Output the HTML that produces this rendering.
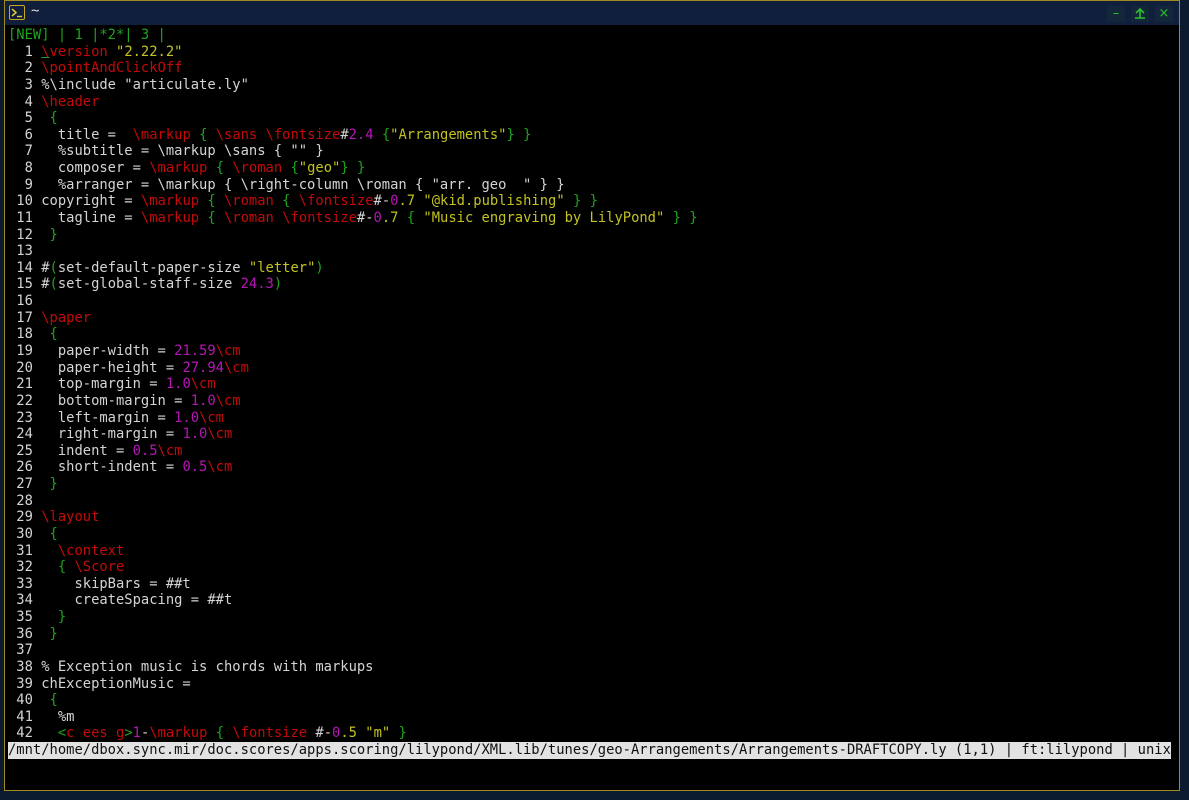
<!DOCTYPE html>
<html><head><meta charset="utf-8">
<style>
html,body{margin:0;padding:0;width:1189px;height:800px;overflow:hidden;background:#0c1a30;}
#win{position:absolute;left:4px;top:0;width:1176px;height:791px;background:#000;border:1px solid #a08a20;box-sizing:border-box;}
#title{position:absolute;left:0;top:0;right:0;height:24px;background:#0f1f3c;}
#icon{position:absolute;left:4px;top:4px;width:16px;height:15px;border:1px solid #c9a820;border-radius:2px;box-sizing:border-box;}
#tilde{position:absolute;left:26px;top:2px;color:#ddd;font:14px "DejaVu Sans Mono",monospace;}
.btn{position:absolute;top:5px;width:18px;height:16px;background:#12283a;color:#2cc02c;font:13px "DejaVu Sans",sans-serif;text-align:center;line-height:16px;}
.r{position:absolute;left:3px;height:16.63px;white-space:pre;font:13.8px/16.63px "DejaVu Sans Mono",monospace;color:#d4d4d4;}
.k{color:#c20a0a}.g{color:#1fa31f}.y{color:#c2c220}.m{color:#b516b5}
#status{position:absolute;left:3px;top:741px;width:1163px;height:17px;background:#e2e2e2;color:#111;white-space:pre;font:13.8px/17px "DejaVu Sans Mono",monospace;}
#rows{position:absolute;left:0;top:1px;}
</style></head><body>
<div id="win">
<div id="title">
 <div id="icon"><svg width="14" height="13" viewBox="0 0 14 13"><path d="M2 3 L6 6.5 L2 10" stroke="#e8c830" stroke-width="1.5" fill="none"/><path d="M7 10.5 H12" stroke="#e8c830" stroke-width="1.4"/></svg></div>
 <div id="tilde">~</div>
 <div class="btn" style="left:1102px">–</div>
 <div class="btn" style="left:1126px"><svg width="14" height="14" viewBox="0 0 14 14"><path d="M2 12 H12 M7 12 V4 M3 7 L7 3 L11 7" stroke="#2cc02c" stroke-width="1.6" fill="none"/></svg></div>
 <div class="btn" style="left:1150px">×</div>
</div>
<div id="rows">
<div class="r g" style="top:25px">[NEW] | 1 |*2*| 3 |</div>
<div class="r" style="top:41.6px">  1 <span class="k" style="text-decoration:underline;text-decoration-color:#1fa31f">\</span><span class="k">version</span> <span class="y">"2.22.2"</span></div>
<div class="r" style="top:58.3px">  2 <span class="k">\pointAndClickOff</span></div>
<div class="r" style="top:74.9px">  3 %\include "articulate.ly"</div>
<div class="r" style="top:91.5px">  4 <span class="k">\header</span></div>
<div class="r" style="top:108.2px">  5 <span class="g"> {</span></div>
<div class="r" style="top:124.8px">  6   title =  <span class="k">\markup</span> <span class="g">{</span> <span class="k">\sans \fontsize</span>#<span class="m">2.4</span> <span class="g">{</span><span class="y">"Arrangements"</span><span class="g">}</span> <span class="g">}</span></div>
<div class="r" style="top:141.4px">  7   %subtitle = \markup \sans { "" }</div>
<div class="r" style="top:158.0px">  8   composer = <span class="k">\markup</span> <span class="g">{</span> <span class="k">\roman</span> <span class="g">{</span><span class="y">"geo"</span><span class="g">}</span> <span class="g">}</span></div>
<div class="r" style="top:174.7px">  9   %arranger = \markup { \right-column \roman { "arr. geo  " } }</div>
<div class="r" style="top:191.3px"> 10 copyright = <span class="k">\markup</span> <span class="g">{</span> <span class="k">\roman</span> <span class="g">{</span> <span class="k">\fontsize</span>#-<span class="m">0</span><span class="y">.7</span> <span class="y">"@kid.publishing"</span> <span class="g">}</span> <span class="g">}</span></div>
<div class="r" style="top:207.9px"> 11   tagline = <span class="k">\markup</span> <span class="g">{</span> <span class="k">\roman \fontsize</span>#-<span class="m">0</span><span class="y">.7</span> <span class="g">{</span> <span class="y">"Music engraving by LilyPond"</span> <span class="g">}</span> <span class="g">}</span></div>
<div class="r" style="top:224.6px"> 12 <span class="g"> }</span></div>
<div class="r" style="top:241.2px"> 13</div>
<div class="r" style="top:257.8px"> 14 #<span class="g">(</span>set-default-paper-size <span class="y">"letter"</span><span class="g">)</span></div>
<div class="r" style="top:274.4px"> 15 #<span class="g">(</span>set-global-staff-size <span class="m">24.3</span><span class="g">)</span></div>
<div class="r" style="top:291.1px"> 16</div>
<div class="r" style="top:307.7px"> 17 <span class="k">\paper</span></div>
<div class="r" style="top:324.3px"> 18 <span class="g"> {</span></div>
<div class="r" style="top:341.0px"> 19   paper-width = <span class="m">21.59</span><span class="k">\cm</span></div>
<div class="r" style="top:357.6px"> 20   paper-height = <span class="m">27.94</span><span class="k">\cm</span></div>
<div class="r" style="top:374.2px"> 21   top-margin = <span class="m">1.0</span><span class="k">\cm</span></div>
<div class="r" style="top:390.8px"> 22   bottom-margin = <span class="m">1.0</span><span class="k">\cm</span></div>
<div class="r" style="top:407.5px"> 23   left-margin = <span class="m">1.0</span><span class="k">\cm</span></div>
<div class="r" style="top:424.1px"> 24   right-margin = <span class="m">1.0</span><span class="k">\cm</span></div>
<div class="r" style="top:440.7px"> 25   indent = <span class="m">0.5</span><span class="k">\cm</span></div>
<div class="r" style="top:457.4px"> 26   short-indent = <span class="m">0.5</span><span class="k">\cm</span></div>
<div class="r" style="top:474.0px"> 27 <span class="g"> }</span></div>
<div class="r" style="top:490.6px"> 28</div>
<div class="r" style="top:507.2px"> 29 <span class="k">\layout</span></div>
<div class="r" style="top:523.9px"> 30 <span class="g"> {</span></div>
<div class="r" style="top:540.5px"> 31   <span class="k">\context</span></div>
<div class="r" style="top:557.1px"> 32   <span class="g">{</span> <span class="k">\Score</span></div>
<div class="r" style="top:573.8px"> 33     skipBars = ##t</div>
<div class="r" style="top:590.4px"> 34     createSpacing = ##t</div>
<div class="r" style="top:607.0px"> 35   <span class="g">}</span></div>
<div class="r" style="top:623.6px"> 36 <span class="g"> }</span></div>
<div class="r" style="top:640.3px"> 37</div>
<div class="r" style="top:656.9px"> 38 % Exception music is chords with markups</div>
<div class="r" style="top:673.5px"> 39 chExceptionMusic =</div>
<div class="r" style="top:690.2px"> 40 <span class="g"> {</span></div>
<div class="r" style="top:706.8px"> 41   %m</div>
<div class="r" style="top:723.4px"> 42   <span class="g">&lt;</span><span class="k">c ees g</span><span class="g">&gt;</span><span class="m">1</span>-<span class="k">\markup</span> <span class="g">{</span> <span class="k">\fontsize</span> #-<span class="m">0</span><span class="y">.5</span> <span class="y">"m"</span> <span class="g">}</span></div>
</div>
<div id="status">/mnt/home/dbox.sync.mir/doc.scores/apps.scoring/lilypond/XML.lib/tunes/geo-Arrangements/Arrangements-DRAFTCOPY.ly (1,1) | ft:lilypond | unix</div>
</div>
</body></html>
